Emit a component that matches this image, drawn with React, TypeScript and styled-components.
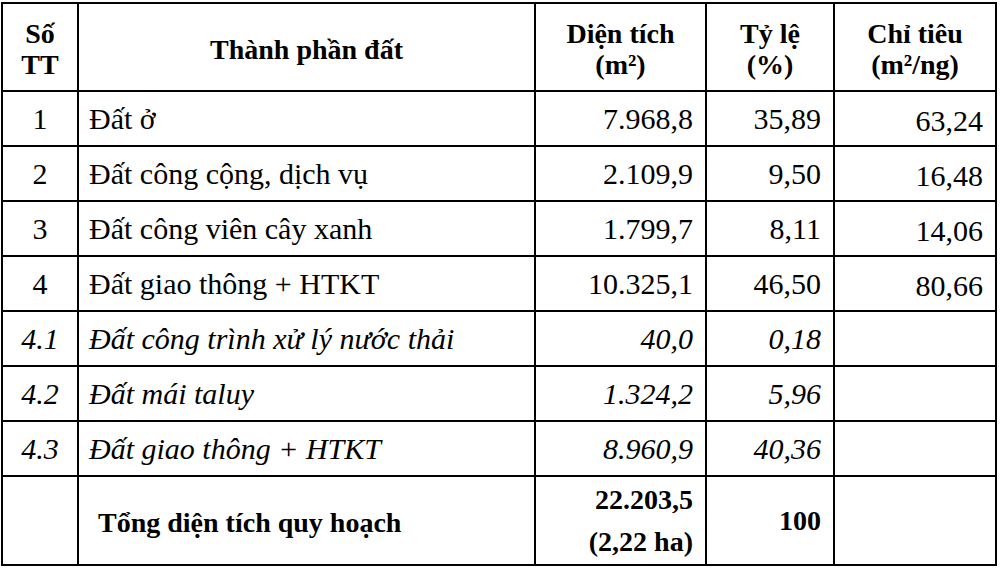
import React from 'react';
import styled, {createGlobalStyle} from "styled-components";

const GlobalStyle = createGlobalStyle`
    html, body {
        margin: 0;
        padding: 0;
        background: #ffffff;
    }
    body {
        font-family: "Liberation Serif", "Times New Roman", serif;
        color: #000;
    }
`

type Row = {
    no: string
    name: string
    area: string
    ratio: string
    norm?: string
    italic?: boolean
}

const rows: Row[] = [
    {no: "1", name: "Đất ở", area: "7.968,8", ratio: "35,89", norm: "63,24"},
    {no: "2", name: "Đất công cộng, dịch vụ", area: "2.109,9", ratio: "9,50", norm: "16,48"},
    {no: "3", name: "Đất công viên cây xanh", area: "1.799,7", ratio: "8,11", norm: "14,06"},
    {no: "4", name: "Đất giao thông + HTKT", area: "10.325,1", ratio: "46,50", norm: "80,66"},
    {no: "4.1", name: "Đất công trình xử lý nước thải", area: "40,0", ratio: "0,18", italic: true},
    {no: "4.2", name: "Đất mái taluy", area: "1.324,2", ratio: "5,96", italic: true},
    {no: "4.3", name: "Đất giao thông + HTKT", area: "8.960,9", ratio: "40,36", italic: true},
]

const App = () => {
    return (
        <>
            <GlobalStyle/>
            <Page>
                <Table>
                    <colgroup>
                        <col style={{width: 76}}/>
                        <col style={{width: 457}}/>
                        <col style={{width: 171}}/>
                        <col style={{width: 128}}/>
                        <col style={{width: 162}}/>
                    </colgroup>
                    <thead>
                    <HeadRow>
                        <HeadCell>Số<br/>TT</HeadCell>
                        <HeadCell>Thành phần đất</HeadCell>
                        <HeadCell>Diện tích<br/>(m²)</HeadCell>
                        <HeadCell>Tỷ lệ<br/>(%)</HeadCell>
                        <HeadCell>Chỉ tiêu<br/>(m²/ng)</HeadCell>
                    </HeadRow>
                    </thead>
                    <tbody>
                    {rows.map((r) => (
                        <BodyRow key={r.no} $italic={r.italic}>
                            <Cell $align="center">{r.no}</Cell>
                            <Cell $align="left">{r.name}</Cell>
                            <Cell $align="right">{r.area}</Cell>
                            <Cell $align="right">{r.ratio}</Cell>
                            <NormCell $align="right">{r.norm}</NormCell>
                        </BodyRow>
                    ))}
                    <TotalRow>
                        <Cell $align="center"></Cell>
                        <TotalLabel>Tổng diện tích quy hoạch</TotalLabel>
                        <Cell $align="right">
                            <Bold>22.203,5</Bold>
                            <SubLine>(2,22 ha)</SubLine>
                        </Cell>
                        <Cell $align="right"><Bold>100</Bold></Cell>
                        <Cell $align="right"></Cell>
                    </TotalRow>
                    </tbody>
                </Table>
            </Page>
        </>
    );
};

export default App;

const serif = `"Liberation Serif", "Times New Roman", "DejaVu Serif", serif`

const Page = styled.div`
    width: 1000px;
    height: 569px;
    padding: 2px 0 0 1px;
    box-sizing: border-box;
    overflow: hidden;
    font-family: ${serif};
`

const Table = styled.table`
    width: 996px;
    table-layout: fixed;
    border-collapse: collapse;
    border: 2px solid #000;
    font-family: ${serif};
    font-size: 30px;
    color: #000;
`

const HeadRow = styled.tr`
    height: 88px;
`

const HeadCell = styled.th`
    border: 2px solid #000;
    padding: 4px 4px 0;
    font-family: ${serif};
    font-weight: 700;
    font-size: 28px;
    line-height: 31px;
    text-align: center;
    vertical-align: middle;
`

const BodyRow = styled.tr<{ $italic?: boolean }>`
    height: 55px;
    font-style: ${p => p.$italic ? "italic" : "normal"};
`

const TotalRow = styled.tr`
    height: 89px;
`

const Cell = styled.td<{ $align: "left" | "right" | "center" }>`
    border: 2px solid #000;
    padding: 0 ${p => p.$align === "right" ? "12px" : "0"} 0 ${p => p.$align === "left" ? "10px" : "0"};
    font-family: ${serif};
    text-align: ${p => p.$align};
    vertical-align: middle;
    line-height: 30px;
    white-space: nowrap;
`

const NormCell = styled(Cell)`
    padding-top: 5px;
`

const TotalLabel = styled.td`
    border: 2px solid #000;
    padding: 4px 0 0 19px;
    font-family: ${serif};
    font-weight: 700;
    font-size: 28px;
    vertical-align: middle;
`

const Bold = styled.div`
    font-weight: 700;
    font-size: 28px;
`

const SubLine = styled(Bold)`
    margin-top: 12px;
`
